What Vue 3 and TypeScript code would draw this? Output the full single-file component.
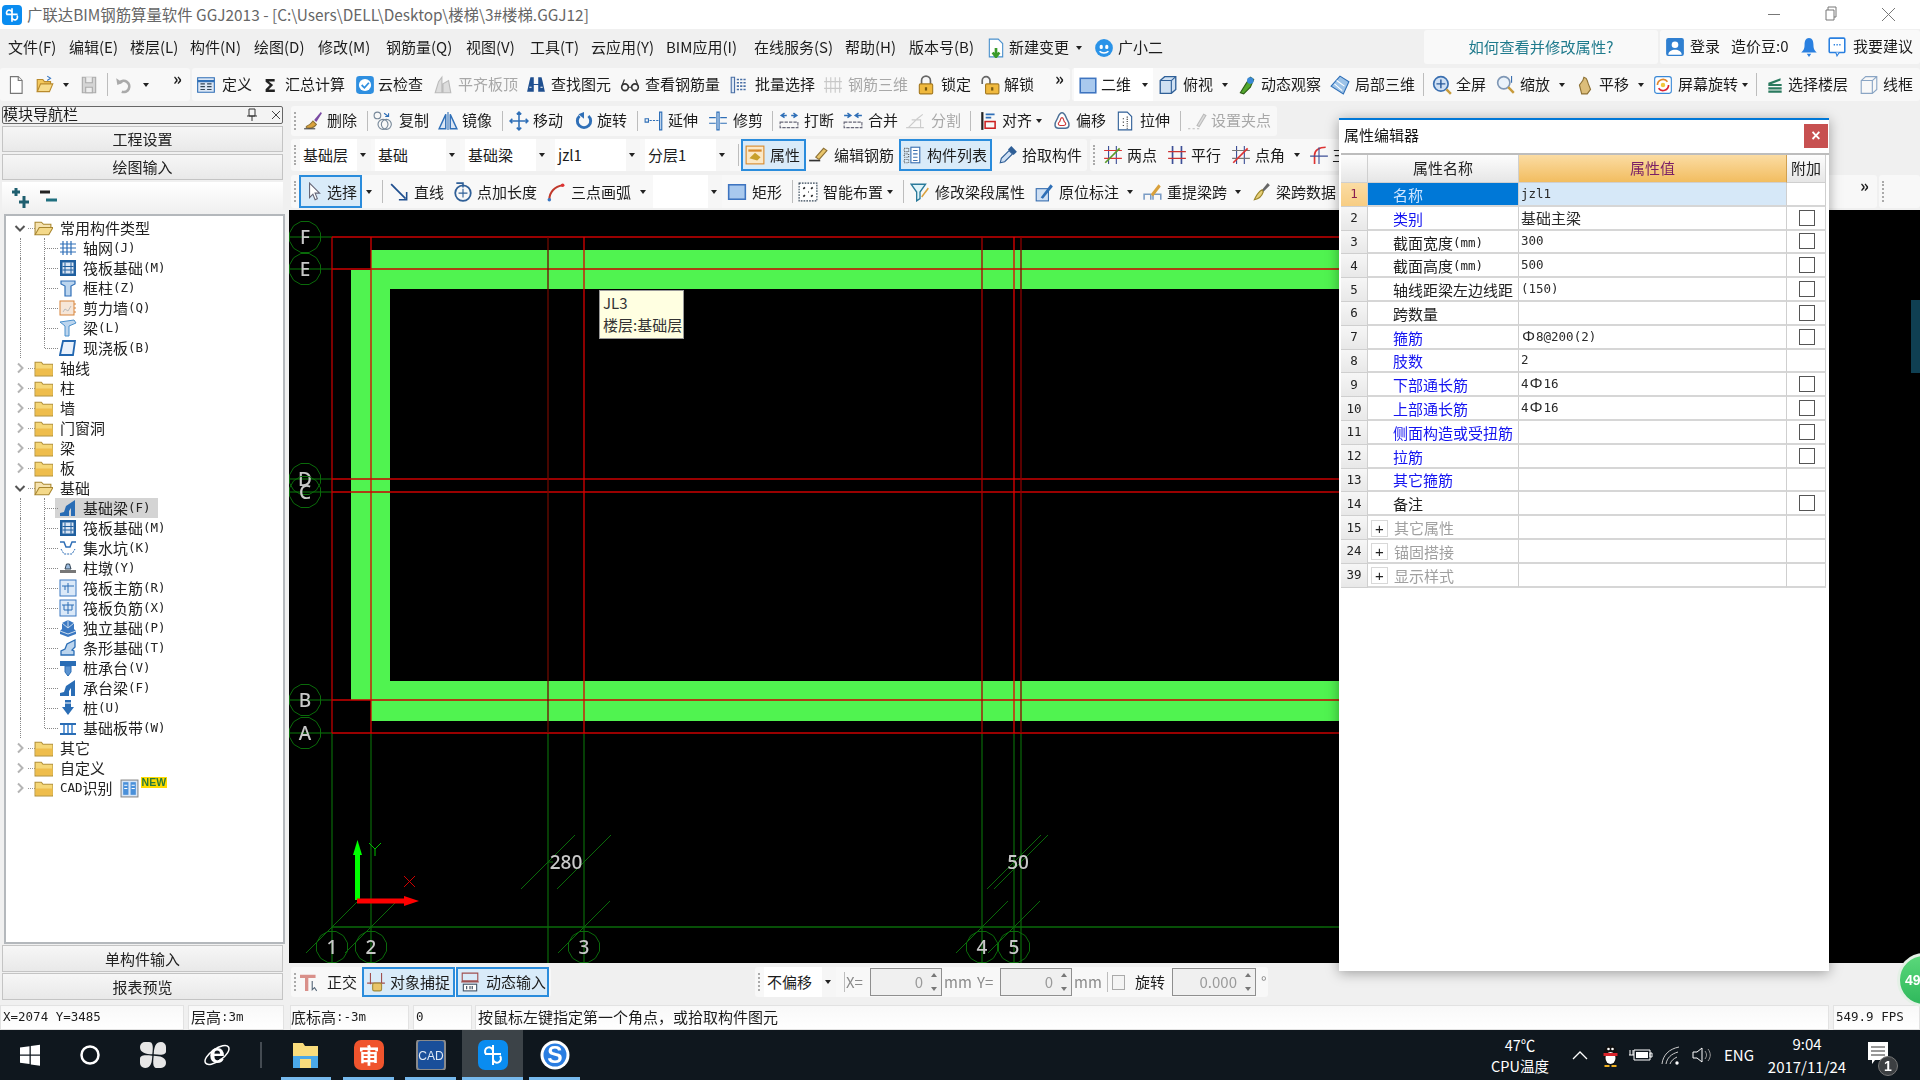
<script setup lang="ts">
type It = { x: number; k?: string; i?: string; tx?: number; t?: string; f?: string; end?: number; il?: number; w?: number; g?: number; mr?: number }
type Band = { x: number; end: number; ml: number; pad: number; items: It[] }

const I = (x: number, i: string, tx: number, t: string, f = '', end?: number, il = 0): It => ({ x, i, tx, t, f, end, il })
const T = (x: number, t: string, f = ''): It => ({ x, t, f })
const C = (cx: number): It => ({ x: cx - 6, k: 'caret' })
const S = (x: number): It => ({ x, k: 'sep' })
const G = (x: number): It => ({ x, k: 'grip' })
const Cb = (x: number, end: number, t: string): It => ({ x, end, t, k: 'combo' })
const Sp = (x: number, end: number, t: string): It => ({ x, end, t, k: 'spin' })
const Ck = (x: number): It => ({ x, k: 'ckit' })
const D = (x: number): It => ({ x, t: '»', k: 'more' })

const ICON = 20
function band(x: number, end: number, items: It[]): Band {
  items.forEach((it, n) => {
    const nx = n + 1 < items.length ? items[n + 1].x : end
    const e = it.end ?? nx
    it.w = e - it.x
    it.g = nx - e
    it.il = it.il ?? 0
    if (it.tx) it.mr = it.tx - it.x - it.il - ICON
  })
  return { x, end, ml: 0, pad: items[0].x - x, items }
}
function line(cls: string, start: number, bands: Band[]) {
  let p = start
  bands.forEach((b) => {
    b.ml = b.x - p
    p = b.end
  })
  return { cls, bands }
}

const topLines = [
  line('l-menu', 0, [
    band(0, 1422, [
      T(8, '文件(F)'), T(69, '编辑(E)'), T(130, '楼层(L)'), T(190, '构件(N)'), T(254, '绘图(D)'), T(318, '修改(M)'),
      T(386, '钢筋量(Q)'), T(466, '视图(V)'), T(530, '工具(T)'), T(591, '云应用(Y)'), T(666, 'BIM应用(I)'), T(754, '在线服务(S)'),
      T(845, '帮助(H)'), T(909, '版本号(B)'), I(986, 'docg', 1009, '新建变更'), C(1079), I(1094, 'xiao', 1118, '广小二')
    ]),
    band(1424, 1658, [{ x: 1424, t: '如何查看并修改属性?', k: 'help' }]),
    band(1660, 1920, [I(1665, 'login', 1690, '登录'), T(1731, '造价豆:0'), I(1799, 'bell', 1799, ''), I(1827, 'sugg', 1853, '我要建议')])
  ]),
  line('l-tb', 0, [
    band(0, 190, [
      I(6, 'new', 30, ''), I(35, 'open', 56, ''), C(66), I(79, 'save', 100, '', 'dim'), S(107), I(114, 'undo', 136, '', 'dim'), C(146), D(173)
    ]),
    band(192, 1070, [
      I(196, 'def', 222, '定义'), I(260, 'sigma', 285, '汇总计算'), I(355, 'cloud', 378, '云检查'), I(433, 'flat', 458, '平齐板顶', 'dim'),
      I(526, 'binoc', 551, '查找图元'), I(620, 'glass', 645, '查看钢筋量'), I(729, 'batch', 755, '批量选择'), I(823, 'r3d', 848, '钢筋三维', 'dim'),
      I(916, 'lock', 941, '锁定'), I(980, 'unlock', 1004, '解锁'), D(1055)
    ]),
    band(1072, 1920, [
      I(1074, 'square', 1101, '二维', 'white', 1139, 4), { x: 1139, end: 1153, k: 'caret white' },
      I(1158, 'cube', 1183, '俯视'), C(1225), I(1237, 'orbit', 1261, '动态观察'), I(1330, 'local', 1355, '局部三维'), S(1423),
      I(1432, 'full', 1456, '全屏'), I(1496, 'zoomi', 1520, '缩放'), C(1562), I(1575, 'hand', 1599, '平移'), C(1641),
      I(1653, 'rot', 1678, '屏幕旋转'), C(1745), S(1756), I(1765, 'layers', 1788, '选择楼层'), I(1859, 'wire', 1883, '线框')
    ])
  ])
]

const rows = [
  line('l-r2', 289, [
    band(291, 1277, [
      G(291), I(303, 'brush', 327, '删除'), S(367), I(373, 'copy', 399, '复制'), I(438, 'mirror', 462, '镜像'), S(502),
      I(509, 'move', 533, '移动'), I(574, 'rot2', 597, '旋转'), S(637), I(644, 'extend', 668, '延伸'), I(708, 'trim', 733, '修剪'), S(772),
      I(779, 'brk', 804, '打断'), I(843, 'mrg', 868, '合并'), I(905, 'splt', 931, '分割', 'dim'), S(970), I(979, 'alignl', 1002, '对齐'), C(1039),
      I(1052, 'offs', 1076, '偏移'), I(1115, 'strch', 1140, '拉伸'), S(1180), I(1187, 'grab', 1211, '设置夹点', 'dim')
    ])
  ]),
  line('l-r3', 289, [
    band(291, 1087, [
      G(291), Cb(300, 371, '基础层'), Cb(375, 460, '基础'), Cb(465, 550, '基础梁'), Cb(555, 640, 'jzl1'), Cb(645, 730, '分层1'), S(738),
      I(741, 'prop', 770, '属性', 'active', 806, 4), I(808, 'ebar', 834, '编辑钢筋'), I(899, 'list', 927, '构件列表', 'active', 992, 3), I(998, 'drop', 1022, '拾取构件')
    ]),
    band(1090, 1340, [G(1090), I(1103, 'twop', 1127, '两点'), I(1167, 'para', 1191, '平行'), I(1231, 'ang', 1255, '点角'), C(1297), I(1309, 'tri', 1332, '三')])
  ]),
  line('l-r4', 289, [
    band(291, 1877, [
      G(291), I(299, 'cursor', 327, '选择', 'active', 362, 5), C(369), S(382), I(390, 'line', 414, '直线'), I(453, 'plen', 477, '点加长度'),
      I(546, 'arc', 571, '三点画弧'), C(643), Cb(653, 722, ''), I(727, 'rect', 752, '矩形'), S(792), I(798, 'smart', 823, '智能布置'), C(890), S(903),
      I(910, 'fnl', 935, '修改梁段属性'), I(1034, 'mark', 1059, '原位标注'), C(1130), I(1143, 'relift', 1167, '重提梁跨'), C(1238),
      I(1251, 'broom', 1276, '梁跨数据'), D(1860)
    ]),
    band(1879, 1920, [G(1879)])
  ])
]

const bottomLine = line('l-bot', 289, [
  band(291, 551, [G(291), I(300, 'ortho', 327, '正交'), I(362, 'snap', 390, '对象捕捉', 'active', 455, 4), I(456, 'dyn', 486, '动态输入', 'active', 549, 4)]),
  band(755, 1268, [
    G(755), Cb(764, 836, '不偏移'), S(844), T(846, 'X=', 'gray'), Sp(870, 942, '0'), T(944, 'mm', 'gray'), T(977, 'Y=', 'gray'), Sp(1000, 1072, '0'),
    T(1074, 'mm', 'gray'), S(1107), Ck(1112), T(1135, '旋转'), Sp(1172, 1256, '0.000'), T(1261, '°', 'gray')
  ])
])

const ico: Record<string, string> = {
  new: '<path d="M4 1.5h7l3.5 3.5v11.5H4z" fill="#fff" stroke="#777"/><path d="M11 1.5V5h3.5" fill="#eee" stroke="#777"/>',
  open: '<path d="M2 15V4h5l1.5 2H14v2" fill="#f4c95d" stroke="#b98a2c"/><path d="M2 15l3-7h11l-3 7z" fill="#f7dc8c" stroke="#b98a2c"/><path d="M11 1l3 2-3 2" fill="none" stroke="#3a78c2"/>',
  save: '<path d="M3 2h12v14H3z" fill="#d5d5d5" stroke="#aaa"/><path d="M6 2v5h6V2M6 11h6v5H6z" fill="#eee" stroke="#aaa"/>',
  undo: '<path d="M5 7a5 5 0 1 1 2 8" fill="none" stroke="#aaa" stroke-width="2.4"/><path d="M2 3l1 6 5-2z" fill="#aaa"/>',
  def: '<path d="M1.5 2.5h15v13h-15z" fill="#dbe6f4" stroke="#2f6fb7"/><path d="M1.5 5.5h15" stroke="#2f6fb7" stroke-width="2"/><path d="M4 8h4M4 10.5h4M4 13h4M10 8h4M10 10.5h4M10 13h4" stroke="#345"/>',
  sigma: '<text x="9" y="15" text-anchor="middle" font-size="16" font-weight="700" font-family="DejaVu Sans" fill="#222">Σ</text>',
  cloud: '<rect x="1" y="1" width="16" height="16" rx="3" fill="#2f8fe0"/><circle cx="9" cy="9" r="5.5" fill="#fff"/><path d="M6 9l2.5 2.5L12.5 7" fill="none" stroke="#2f8fe0" stroke-width="1.6"/>',
  flat: '<path d="M2 16l3-10 3-4v14zM9 16V8l5-3 2 11z" fill="#ddd" stroke="#bbb"/>',
  binoc: '<path d="M3 6l1-4h3v6h4V2h3l1 4 2 9h-6V9H7v6H1z" fill="#1f4f8f"/><path d="M3 11h2M13 11h2" stroke="#fff"/>',
  glass: '<circle cx="4.5" cy="11" r="3" fill="none" stroke="#333" stroke-width="1.5"/><circle cx="13.5" cy="11" r="3" fill="none" stroke="#333" stroke-width="1.5"/><path d="M7.5 11h3M2 9l2-5M16 9l-2-5" fill="none" stroke="#333"/>',
  batch: '<path d="M2 2h3v14H2z" fill="#dbe6f4" stroke="#4a6fa5"/><path d="M7 4h9M7 7h9M7 10h9M7 13h9" stroke="#4a6fa5" stroke-width="1.4" stroke-dasharray="2 1"/>',
  r3d: '<path d="M3 2v14M7 2v14M11 2v14M15 2v14M1 6h16M1 12h16" stroke="#c8c8c8"/>',
  lock: '<path d="M5 8V5a4 4 0 0 1 8 0v3" fill="none" stroke="#666" stroke-width="1.5"/><rect x="3" y="8" width="12" height="9" rx="1" fill="#f0b93e" stroke="#a57a20"/><rect x="8" y="11" width="2" height="3" fill="#7a5a10"/>',
  unlock: '<path d="M2 8V5a3.5 3.5 0 0 1 7 0v3" fill="none" stroke="#666" stroke-width="1.5"/><rect x="5" y="8" width="12" height="9" rx="1" fill="#f0b93e" stroke="#a57a20"/><rect x="10" y="11" width="2" height="3" fill="#7a5a10"/>',
  square: '<rect x="2" y="3" width="14" height="13" fill="#a9c9ee" stroke="#3e74c0" stroke-width="1.4"/>',
  cube: '<path d="M2 5l4-3.5h10V13l-4 3.5H2z" fill="#cfe0f2" stroke="#2f5f97" stroke-width="1.2"/><path d="M2 5h10v11.5M12 5l4-3.5" fill="none" stroke="#2f5f97"/>',
  orbit: '<path d="M3 16L8 8l4-6 3 2-3 7-6 6z" fill="#53a82e" stroke="#2d5e17"/><circle cx="12" cy="5" r="3" fill="#3a88d6"/>',
  local: '<path d="M9 1l8 5-5 11L1 10z" fill="#9dc3e8" stroke="#2f6fb7"/><path d="M6 5l7 5M4 8l7 6" stroke="#fff"/>',
  full: '<circle cx="8" cy="8" r="6.5" fill="#cfe0f4" stroke="#3a6fb0" stroke-width="1.5"/><path d="M8 4v8M4 8h8" stroke="#2a5a9a" stroke-width="1.3"/><path d="M13 13l4 4" stroke="#c79a3a" stroke-width="2.2"/>',
  zoomi: '<circle cx="7" cy="7" r="5.5" fill="#eaf2fa" stroke="#7f97b5" stroke-width="1.5"/><path d="M11 11l5 5" stroke="#c79a3a" stroke-width="2.2"/><path d="M14 1v6" stroke="#3a6fb0"/>',
  hand: '<path d="M4 9l3-4 1-3 2 1 1 2 1 3 2 5-3 4H6z" fill="#dcbd7a" stroke="#8d7136"/>',
  rot: '<rect x="1.5" y="1.5" width="15" height="15" rx="2" fill="#fff" stroke="#3a88d6"/><path d="M4 9a5 5 0 0 1 9-3" fill="none" stroke="#e3872a" stroke-width="1.5"/><path d="M14 9a5 5 0 0 1-9 3" fill="none" stroke="#d23" stroke-width="1.5"/><circle cx="9" cy="9" r="2" fill="#f0c93e"/>',
  layers: '<path d="M3 7l11-4v2L6 8h9v2H3zM3 11h12v2H3zM3 14h12v2H3z" fill="#2a7a5f"/>',
  wire: '<path d="M2 5l4-3.5h10V13l-4 3.5H2zM2 5h10v11.5M12 5l4-3.5" fill="none" stroke="#8aa5c4"/>',
  brush: '<path d="M3 14c2-1 4-2 6-5l3 3c-2 3-5 4-9 3z" fill="#d9a13c" stroke="#8d7136"/><path d="M10 8l6-7 1 1-5 8z" fill="#7a4aa3"/><path d="M1 16h10" stroke="#444"/>',
  copy: '<circle cx="4" cy="4" r="3" fill="none" stroke="#789"/><circle cx="9" cy="12" r="4.5" fill="none" stroke="#789"/><circle cx="12" cy="12" r="4.5" fill="none" stroke="#789"/><path d="M10 2l4 3M14 2v3h-3" fill="none" stroke="#2f6fb7"/>',
  mirror: '<path d="M1 16L7 3v13zM17 16L11 3v13z" stroke="#2f6fb7" stroke-width="1.3" fill="#dbe6f4"/><path d="M9 1v16" stroke="#2f6fb7"/>',
  move: '<path d="M9 1v16M1 9h16M7 3l2-2 2 2M7 15l2 2 2-2M3 7L1 9l2 2M15 7l2 2-2 2" fill="none" stroke="#2f6fb7" stroke-width="1.4"/>',
  rot2: '<path d="M5 4.5a6 6 0 1 0 8 0" fill="none" stroke="#2f6fb7" stroke-width="2.6"/><path d="M9 1v6L4 3z" fill="#2f6fb7"/>',
  extend: '<path d="M1 7h3v3H1z" fill="none" stroke="#2f6fb7"/><path d="M5 8.5h8" stroke="#2f6fb7" stroke-dasharray="2 1"/><path d="M14 1h2v16h-2z" fill="#cfe0f4" stroke="#2f6fb7"/>',
  trim: '<path d="M8 1h2v16H8z" fill="#cfe0f4" stroke="#2f6fb7"/><path d="M1 6h6M1 11h6M11 6h6M11 11h6" stroke="#2f6fb7"/>',
  brk: '<path d="M2 4h5M11 4h5M5 2L2 4l3 2M13 2l3 2-3 2" fill="none" stroke="#2f6fb7" stroke-width="1.3"/><path d="M1 10h16v5H1z" fill="none" stroke="#667" stroke-dasharray="3 1"/>',
  mrg: '<path d="M1 4h5M12 4h5M4 2l3 2-3 2M14 2l-3 2 3 2" fill="none" stroke="#2f6fb7" stroke-width="1.3"/><path d="M1 10h16v5H1z" fill="none" stroke="#667" stroke-dasharray="3 1"/>',
  splt: '<path d="M1 15h16M3 15l8-8 5-4M6 8h8v7" fill="none" stroke="#ccc"/>',
  alignl: '<path d="M3 1v16" stroke="#222" stroke-width="2"/><path d="M6 3h8M6 6h5" stroke="#2f6fb7" stroke-width="1.6"/><rect x="5.5" y="9.5" width="9" height="6" fill="none" stroke="#c22" stroke-width="1.4"/>',
  offs: '<path d="M9 1.5c3 0 3 4 5 7s2 7-2 7H6c-4 0-4-4-2-7s2-7 5-7z" fill="#fff" stroke="#4b6f95" stroke-width="1.3"/><path d="M9 6c2 0 1 3 2.5 4s1 3-1 3H7.5c-2 0-2.5-2-1-3s.5-4 2.5-4z" fill="none" stroke="#c33"/>',
  strch: '<path d="M3 1h8l4 4v12H3z" fill="#fff" stroke="#2f5f97"/><path d="M7 7h2M7 10h2M7 13h2M11 5v12" stroke="#333" stroke-dasharray="1 1"/>',
  grab: '<path d="M1 16h2M5 16h2M9 16h2" stroke="#bbb"/><path d="M9 13l6-10 2 1-6 10z" fill="#ddd" stroke="#bbb"/>',
  prop: '<rect x="1" y="1" width="16" height="16" fill="#fbe8c6" stroke="#d88b2c"/><path d="M3 5h12" stroke="#d88b2c" stroke-width="2"/><path d="M4 12l5-5 5 4-3 3z" fill="#c8a02c"/>',
  ebar: '<path d="M1 14h10" stroke="#333" stroke-width="1.5"/><path d="M7 11l7-8 3 2-7 8z" fill="#e9c56a" stroke="#8d7136"/>',
  list: '<path d="M2 3h4v3H2zM2 8h4v3H2zM2 13h4v3H2z" fill="none" stroke="#555" stroke-dasharray="1 1"/><rect x="8" y="2" width="8" height="14" fill="#fff" stroke="#3a6fb0"/><path d="M10 5h4M10 8h4M10 11h4M10 14h4" stroke="#3a6fb0"/>',
  drop: '<path d="M2 16l1-4 7-7 3 3-7 7z" fill="#cfe0f4" stroke="#2f5f97"/><path d="M9 4l3-3 5 5-3 3z" fill="#2f5f97"/>',
  twop: '<path d="M5 1v16M12 1v16" stroke="#3d4f96"/><path d="M1 5h16M1 12h16" stroke="#d33"/><path d="M2 16L15 3" stroke="#5a9a2a" stroke-width="1.5"/>',
  para: '<path d="M5 1v16M13 1v16" stroke="#3d4f96" stroke-width="1.5"/><path d="M1 6h16M1 12h16" stroke="#c33"/>',
  ang: '<path d="M5 1v16M12 1v16" stroke="#3d4f96"/><path d="M1 5h16M1 12h16" stroke="#777"/><path d="M2 16L15 3" stroke="#d33" stroke-width="1.5"/>',
  tri: '<path d="M5 17V9c0-4 4-7 10-7" fill="none" stroke="#d33" stroke-width="1.5"/><path d="M1 10h16M9 2v15" stroke="#3d4f96"/>',
  cursor: '<path d="M5 1v13l3-3 2 5 2-1-2-5h4z" fill="#fff" stroke="#667"/>',
  line: '<path d="M1 2l13 13" stroke="#1f4f8f" stroke-width="1.6"/><path d="M15 9v7H8" fill="none" stroke="#1f4f8f" stroke-width="1.4"/>',
  plen: '<circle cx="9" cy="10" r="7" fill="none" stroke="#2f5f97" stroke-width="1.6"/><path d="M9 6v8M5 10h8" stroke="#2f5f97"/><path d="M3 1h6v4" fill="none" stroke="#2f5f97" stroke-width="1.4"/>',
  arc: '<path d="M3 16C3 9 8 4 15 3" fill="none" stroke="#c0392b" stroke-width="1.8"/><circle cx="3" cy="16" r="1.6" fill="#3a78c2"/><circle cx="15" cy="3" r="1.6" fill="#d33"/>',
  rect: '<rect x="1.5" y="2.5" width="15" height="13" fill="#a9c9ee" stroke="#3e74c0" stroke-width="1.4"/>',
  smart: '<rect x="1" y="1" width="16" height="16" fill="#fff" stroke="#345" stroke-dasharray="1.5 1"/><path d="M5 5l1 1M12 5l1 1M9 9h.5M5 12l1 1M12 12l1 1" stroke="#222" stroke-width="2"/>',
  fnl: '<path d="M1 2h13l-5 7v6l-3 2V9z" fill="#dff4fa" stroke="#2a7a9a" stroke-width="1.2"/><path d="M10 13l6-8 1 1-6 8z" fill="#d9a13c"/>',
  mark: '<rect x="2" y="6" width="11" height="11" fill="#cfe0f4" stroke="#3a6fb0"/><path d="M6 14l9-12 2 2-9 11z" fill="#2f6fb7"/>',
  relift: '<path d="M1 16v-5h6v5M9 16v-5h7v5" fill="none" stroke="#7a9bc4" stroke-width="1.4"/><path d="M7 11l7-9 2 2-7 9z" fill="#d9a13c"/>',
  broom: '<path d="M10 7l5-6 2 2-6 6z" fill="#666"/><path d="M3 16c2-4 3-7 7-9l1 2c-1 3-3 6-8 7z" fill="#e7cf78" stroke="#9a862c"/>',
  ortho: '<path d="M0 4h14M6 4v13" stroke="#d9908a" stroke-width="3"/><path d="M11 8v8l2-2 2 3" fill="#fff" stroke="#567"/>',
  snap: '<path d="M4 1v10M14 1v10M1 10h16" stroke="#a05050"/><rect x="6" y="10" width="8" height="7" rx="1.5" fill="#e9c56a" stroke="#a48c3a"/>',
  dyn: '<path d="M2 1h14v7H2zM1 9h16" fill="none" stroke="#a05050"/><rect x="3" y="11" width="12" height="6" fill="#fff" stroke="#456"/><path d="M6 12.5v3M9 12.5v3M11 12.5v3" stroke="#345"/>',
  grid: '<path d="M4 2v14M8 2v14M12 2v14M1 5h16M1 9h16M1 13h16" stroke="#2f6fb7" stroke-width="1.2"/>',
  raft: '<rect x="1" y="1" width="16" height="16" fill="#1f5f9f"/><rect x="3.5" y="3.5" width="11" height="11" fill="#dbe6f4"/><path d="M6 3.5v11M12 3.5v11M3.5 7.5h11M3.5 11h11" stroke="#1f5f9f"/>',
  col: '<path d="M2 2h14v3l-4 2v10H6V7L2 5z" fill="#bcd5ee" stroke="#2f6fb7" stroke-width="1.2"/>',
  wall: '<rect x="1" y="2" width="14" height="14" fill="#f6e6d8" stroke="#d8843a"/><path d="M4 13l2-3 3 2 3-5" fill="none" stroke="#bbb"/><path d="M15 5h2M15 9h2M15 13h2" stroke="#d8843a"/>',
  beam: '<path d="M1 3l14-2 2 3-7 3v10H6V7z" fill="#bcd5ee" stroke="#4a90cc"/>',
  slab: '<path d="M4 2h12l-2 14H1z" fill="#e9f1fb" stroke="#2166b0" stroke-width="1.8"/>',
  fbeam: '<path d="M1 17v-3l4-1 2-6 9-6v16h-4V9l-2 3v5z" fill="#2a6db5"/>',
  pit: '<path d="M1 3h4l2 5h4l2-5h4" fill="none" stroke="#2f6fb7" stroke-width="1.5"/><path d="M2 10l3 5h8l3-5" fill="none" stroke="#2f6fb7" stroke-dasharray="2 1"/>',
  pier: '<path d="M6 10l1.5-5h3L12 10z" fill="#9dbde0" stroke="#345"/><rect x="1" y="11" width="16" height="3" fill="#777"/>',
  rmain: '<rect x="1" y="1" width="16" height="16" fill="#dbe9f8" stroke="#3a78c2"/><path d="M3 7h12M9 4v10M6 7v4" fill="none" stroke="#2a6db5"/>',
  rneg: '<rect x="1" y="1" width="16" height="16" fill="#dbe9f8" stroke="#3a78c2"/><path d="M3 6h12M9 3v12M5 6v5h8V6" fill="none" stroke="#2a6db5"/>',
  iso: '<path d="M9 1l6 3v6l2 2v3l-8 3-8-3v-3l2-2V4z" fill="#3a78c2"/><path d="M9 1v8M3 4l6 5 6-5M1 12l8 3 8-3" fill="none" stroke="#cde"/>',
  strip: '<path d="M2 16v-4l4-2 2-5 8-4v7l-3 3 2 1v4z" fill="#bcd5ee" stroke="#2a6db5" stroke-width="1.3"/>',
  cap: '<path d="M1 2h16v5H1z" fill="#2a6db5"/><path d="M6 7h6v6l-3 4-3-4z" fill="#5a93d0" stroke="#2a6db5"/>',
  pile: '<path d="M6 1h6v7h3l-6 8-6-8h3z" fill="#2a6db5"/><path d="M6 4h6" stroke="#fff"/>',
  band: '<path d="M1 4h16v2H1zM1 14h16v2H1z" fill="#2a6db5"/><path d="M5 6v8M9 6v8M13 6v8" stroke="#6a9fd8" stroke-width="2"/>',
  cad: '<rect x="1" y="1" width="16" height="16" fill="#d7e6f7" stroke="#888"/><rect x="3" y="3" width="5" height="12" fill="#4a90d9"/><rect x="10" y="3" width="5" height="12" fill="#4a90d9"/><path d="M4 6h3M4 9h3M11 6h3M11 9h3" stroke="#fff"/>',
  folder: '<path d="M1 16V3h6l1.5 2H18v11z" fill="#f5d778" stroke="#b29038"/><path d="M1.500 9h16v6.500h-16z" fill="#eebd4c"/>',
  fopen: '<path d="M1 15V3h6l2 2h7v3" fill="#f6e3b0" stroke="#a8862f"/><path d="M1 15l4-7h13l-4 7z" fill="#f4d98a" stroke="#a8862f"/>',
  docg: '<path d="M3 1h8l4 4v12H3z" fill="#fff" stroke="#4a90cc"/><path d="M9 9v6M6 13l3 4 3-4" fill="none" stroke="#3a9a2a" stroke-width="2.4"/>',
  xiao: '<circle cx="9" cy="9" r="8" fill="#2a93e8"/><ellipse cx="6.500" cy="8" rx="1.500" ry="2" fill="#fff"/><ellipse cx="11.500" cy="8" rx="1.500" ry="2" fill="#fff"/><path d="M5 12c2 2 6 2 8 0" fill="none" stroke="#fff" stroke-width="1.3"/>',
  login: '<rect x="1" y="1" width="16" height="16" rx="2" fill="#2f7fd0"/><circle cx="9" cy="7" r="3" fill="#fff"/><path d="M3 16c0-6 12-6 12 0z" fill="#fff"/>',
  bell: '<path d="M9 1c-3 0-4 3-4 6 0 4-1 5-3 7h14c-2-2-3-3-3-7 0-3-1-6-4-6z" fill="#2a80e0"/><path d="M7 15l2 3 2-3z" fill="#2a80e0"/>',
  sugg: '<rect x="2" y="1" width="14" height="13" rx="1" fill="#fff" stroke="#2a80e0" stroke-width="1.4"/><path d="M8 14l1 3 2-3" fill="#fff" stroke="#2a80e0"/><path d="M6 7h1.200M8.500 7h1.200M11 7h1.200" stroke="#2a80e0" stroke-width="1.500"/>',
  app: '<rect width="18" height="18" rx="3.500" fill="#0a8cf0"/><path d="M9 3v12M4 8.500h10" stroke="#fff" stroke-width="1.500"/><path d="M4.500 8.500a2.500 2.500 0 1 1 4.500-2M13.500 9.500a2.500 2.500 0 1 1-4.500 2" fill="none" stroke="#fff" stroke-width="1.500"/>'
}

const petal = 'M14.300 14.300C8 14 2 13 2 7a5 5 0 0 1 5-5h4c3.500 0 4.500 3 3.300 12.300z'
const tk: Record<string, string> = {
  win: '<path d="M5 7.500l9.500-1.300V14.500H5zM15.800 6L25 4.700v9.800h-9.200zM5 15.700h9.500V24L5 22.700zM15.800 15.700H25v10l-9.200-1.300z" fill="#fff"/>',
  ring: '<circle cx="15" cy="15" r="8.500" stroke="#fff" stroke-width="2.500" fill="none"/>',
  fan: `<g fill="#e6e6e6"><path d="${petal}"/><path transform="rotate(90 15 15)" d="${petal}"/><path transform="rotate(180 15 15)" d="${petal}"/><path transform="rotate(270 15 15)" d="${petal}"/></g>`,
  ie: '<text x="15" y="23" font-size="28" font-family="Liberation Sans" font-weight="700" fill="#fff" text-anchor="middle">e</text><ellipse cx="15" cy="15" rx="14" ry="6" transform="rotate(-35 15 15)" stroke="#fff" fill="none" stroke-width="1.500"/>',
  folder: '<path d="M2 3h10l2 3h13v22H2z" fill="#f9dc7c"/><path d="M2 16h25v12H2z" fill="#4aa8e8"/><rect x="9" y="19" width="11" height="9" fill="#f9dc7c"/>',
  shen: '<rect x="0" y="0" width="30" height="30" rx="7" fill="#f0542d"/><text x="15" y="23" font-size="21" font-family="Noto Sans CJK SC" font-weight="700" fill="#fff" text-anchor="middle">审</text>',
  cad: '<rect x="1" y="0" width="28" height="30" rx="3" fill="#1a4f9a" stroke="#8a8a8a" stroke-width="2"/><text x="15" y="20" font-size="12" font-family="Liberation Sans" fill="#dfe9f5" text-anchor="middle">CAD</text>',
  app: '<rect width="30" height="30" rx="7" fill="#0a8cf0"/><path d="M15 5v20M7 14h16" stroke="#fff" stroke-width="2"/><path d="M8 14a4 4 0 1 1 7-3M22 16a4 4 0 1 1-7 3" fill="none" stroke="#fff" stroke-width="2"/>',
  sogou: '<circle cx="15" cy="15" r="14.500" fill="#fff"/><circle cx="15" cy="15" r="11.500" fill="#2a7de1"/><text x="15" y="23" font-size="23" font-family="Liberation Sans" font-weight="700" fill="#fff" text-anchor="middle">S</text>'
}

const taskItems = [
  { k: 'win', w: 60 }, { k: 'ring', w: 60 }, { k: 'fan', w: 66 }, { k: 'ie', w: 62 },
  { k: '', w: 33, cls: 'tsep' },
  { k: 'folder', w: 50, cls: 'run' }, { k: 'shen', w: 51, cls: 'run', ml: 12 }, { k: 'cad', w: 51, cls: 'run', ml: 11 },
  { k: 'app', w: 61, cls: 'run cur', ml: 6 }, { k: 'sogou', w: 51, cls: 'run', ml: 6 }
]

const tree: { l: number; t: string; key?: string; i?: string; open?: boolean; last?: boolean; sel?: boolean; mono?: boolean }[] = [
  { l: 0, t: '常用构件类型', open: true },
  { l: 1, i: 'grid', t: '轴网', key: '(J)' }, { l: 1, i: 'raft', t: '筏板基础', key: '(M)' }, { l: 1, i: 'col', t: '框柱', key: '(Z)' },
  { l: 1, i: 'wall', t: '剪力墙', key: '(Q)' }, { l: 1, i: 'beam', t: '梁', key: '(L)' }, { l: 1, i: 'slab', t: '现浇板', key: '(B)', last: true },
  { l: 0, t: '轴线' }, { l: 0, t: '柱' }, { l: 0, t: '墙' }, { l: 0, t: '门窗洞' }, { l: 0, t: '梁' }, { l: 0, t: '板' },
  { l: 0, t: '基础', open: true },
  { l: 1, i: 'fbeam', t: '基础梁', key: '(F)', sel: true }, { l: 1, i: 'raft', t: '筏板基础', key: '(M)' }, { l: 1, i: 'pit', t: '集水坑', key: '(K)' },
  { l: 1, i: 'pier', t: '柱墩', key: '(Y)' }, { l: 1, i: 'rmain', t: '筏板主筋', key: '(R)' }, { l: 1, i: 'rneg', t: '筏板负筋', key: '(X)' },
  { l: 1, i: 'iso', t: '独立基础', key: '(P)' }, { l: 1, i: 'strip', t: '条形基础', key: '(T)' }, { l: 1, i: 'cap', t: '桩承台', key: '(V)' },
  { l: 1, i: 'fbeam', t: '承台梁', key: '(F)' }, { l: 1, i: 'pile', t: '桩', key: '(U)' }, { l: 1, i: 'band', t: '基础板带', key: '(W)', last: true },
  { l: 0, t: '其它' }, { l: 0, t: '自定义' }, { l: 0, t: 'CAD', mono: true }
]

const props: { n: string; m?: string; v?: string; blue?: boolean; ck?: boolean; group?: boolean; no: number; sel?: boolean; cjk?: boolean }[] = [
  { no: 1, n: '名称', v: 'jzl1', sel: true },
  { no: 2, n: '类别', v: '基础主梁', blue: true, ck: true, cjk: true },
  { no: 3, n: '截面宽度', m: '(mm)', v: '300', ck: true },
  { no: 4, n: '截面高度', m: '(mm)', v: '500', ck: true },
  { no: 5, n: '轴线距梁左边线距', v: '(150)', ck: true },
  { no: 6, n: '跨数量', ck: true },
  { no: 7, n: '箍筋', v: 'Φ8@200(2)', blue: true, ck: true },
  { no: 8, n: '肢数', v: '2', blue: true },
  { no: 9, n: '下部通长筋', v: '4Φ16', blue: true, ck: true },
  { no: 10, n: '上部通长筋', v: '4Φ16', blue: true, ck: true },
  { no: 11, n: '侧面构造或受扭筋', blue: true, ck: true },
  { no: 12, n: '拉筋', blue: true, ck: true },
  { no: 13, n: '其它箍筋', blue: true },
  { no: 14, n: '备注', ck: true },
  { no: 15, n: '其它属性', group: true },
  { no: 24, n: '锚固搭接', group: true },
  { no: 39, n: '显示样式', group: true }
]

const hY = [237, 269, 479, 492, 700, 733]
const vX = [
  { x: 332, c: '#c00000' }, { x: 371, c: '#d80000' }, { x: 548, c: '#6e0a00' }, { x: 584, c: '#d80000' },
  { x: 982, c: '#a80000' }, { x: 1014, c: '#e00000' }, { x: 1021, c: '#8a0000' }
]
const poly = (cx: number, cy: number, r = 16, n = 12) =>
  Array.from({ length: n }, (_, i) => {
    const a = (i * 2 * Math.PI) / n + Math.PI / n
    return `${(cx + r * Math.cos(a)).toFixed(1)},${(cy + r * Math.sin(a)).toFixed(1)}`
  }).join(' ')
const leftBub = [['F', 237], ['E', 269], ['D', 479], ['C', 492], ['B', 700], ['A', 733]] as [string, number][]
const botBub = [['1', 332], ['2', 371], ['3', 584], ['4', 982], ['5', 1014]] as [string, number][]
const diag = (x: number, y: number, r: number) => `M${x - r} ${y + r}L${x + r} ${y - r}`
</script>

<template>
  <div class="app">
    <div class="win">
      <div class="title">
        <svg class="ticon" viewBox="0 0 18 18" v-html="ico.app"></svg>
        <span class="ttext">广联达BIM钢筋算量软件 GGJ2013 - [C:\Users\DELL\Desktop\楼梯\3#楼梯.GGJ12]</span>
        <div class="wctl">
          <svg viewBox="0 0 57 29"><path d="M22 14.500h12" stroke="#777" fill="none" /></svg>
          <svg viewBox="0 0 57 29"><path d="M23 10h8v10h-8zM25 10V7h8v10h-2" stroke="#777" fill="none" /></svg>
          <svg viewBox="0 0 57 29"><path d="M22 8l13 13M35 8L22 21" stroke="#777" fill="none" /></svg>
        </div>
      </div>

      <div v-for="l in topLines" :key="l.cls" class="line" :class="l.cls">
        <div v-for="b in l.bands" :key="b.x" class="band" :style="{ marginLeft: b.ml + 'px', width: b.end - b.x + 'px', paddingLeft: b.pad + 'px' }">
          <div v-for="it in b.items" :key="it.x" class="it" :class="[it.k, it.f]" :style="{ width: it.w + 'px', marginRight: it.g + 'px' }">
            <svg v-if="it.i" class="ic" viewBox="0 0 18 18" :style="{ marginLeft: it.il + 'px', marginRight: it.mr + 'px' }" v-html="ico[it.i]"></svg>
            <span v-if="it.t">{{ it.t }}</span>
          </div>
        </div>
      </div>

      <div class="main">
        <aside class="left">
          <div class="nav-head"><span>模块导航栏</span>
            <svg class="pin" viewBox="0 0 12 14"><path d="M3 1h6v7H3zM1 8h10M6 8v5" stroke="#333" fill="none" /></svg>
            <svg class="pinx" viewBox="0 0 10 10"><path d="M1 1l8 8M9 1L1 9" stroke="#444" fill="none" /></svg>
          </div>
          <div class="navtab">工程设置</div>
          <div class="navtab">绘图输入</div>
          <div class="tools">
            <svg viewBox="0 0 20 26" width="20" height="26"><path d="M5 3v8M1 7h8M13 11v12M8 17h10" stroke="#1f5f6f" stroke-width="3" fill="none" /></svg>
            <svg viewBox="0 0 20 26" width="20" height="26"><path d="M1 7h10" stroke="#222" stroke-width="3" /><path d="M7 15h11" stroke="#1f6f7f" stroke-width="3" /></svg>
          </div>
          <div class="tree">
            <div v-for="(r, n) in tree" :key="n" class="row" :class="{ ch: r.l === 1, last: r.last }">
              <i v-if="r.l === 1" class="g20"></i>
              <template v-if="r.l === 0">
                <svg class="chev" viewBox="0 0 12 12"><path v-if="r.open" d="M1.500 4l4.500 4.500L10.500 4" stroke="#555" stroke-width="2" fill="none" /><path v-else d="M4 1.500L8.500 6 4 10.500" stroke="#b4b4b4" stroke-width="2" fill="none" /></svg>
                <i class="fdash"></i>
                <svg class="fold" viewBox="0 0 18 18" v-html="r.open ? ico.fopen : ico.folder"></svg>
                <span v-if="r.mono" class="mono cadk">CAD</span><span>{{ r.mono ? '识别' : r.t }}</span>
                <template v-if="r.mono">
                  <svg class="cadi" viewBox="0 0 18 18" v-html="ico.cad"></svg><b class="newb">NEW</b>
                </template>
              </template>
              <div v-else class="node" :class="{ picked: r.sel }">
                <svg class="nic" viewBox="0 0 18 18" v-html="ico[r.i as string]"></svg>
                <span>{{ r.t }}</span><span class="mono">{{ r.key }}</span>
              </div>
            </div>
          </div>
          <div class="navtab b1">单构件输入</div>
          <div class="navtab b2">报表预览</div>
        </aside>

        <section class="right">
          <div v-for="l in rows" :key="l.cls" class="line" :class="l.cls">
            <div v-for="b in l.bands" :key="b.x" class="band" :style="{ marginLeft: b.ml + 'px', width: b.end - b.x + 'px', paddingLeft: b.pad + 'px' }">
              <div v-for="it in b.items" :key="it.x" class="it" :class="[it.k, it.f]" :style="{ width: it.w + 'px', marginRight: it.g + 'px' }">
                <svg v-if="it.i" class="ic" viewBox="0 0 18 18" :style="{ marginLeft: it.il + 'px', marginRight: it.mr + 'px' }" v-html="ico[it.i]"></svg>
                <span v-if="it.t">{{ it.t }}</span>
                <i v-if="it.k === 'combo'" class="tri"></i>
              </div>
            </div>
          </div>

          <div class="canvas">
            <svg class="cad-svg" width="1631" height="753" viewBox="289 210 1631 753">
              <path d="M371 250H1340V289H390V681H1340V721H371V700H351V270H371z" fill="#50f350" />
              <path v-for="y in hY" :key="'g' + y" :d="`M289 ${y}H332`" stroke="#0a7a0a" stroke-width="1.200" />
              <path d="M332 927H1340" stroke="#0a6a0a" stroke-width="1.400" />
              <path v-for="v in vX" :key="'gv' + v.x" :d="`M${v.x} 733V963`" stroke="#0a6a0a" stroke-width="1.200" />
              <path v-for="y in hY" :key="'r' + y" :d="`M332 ${y}H1340`" stroke="#cc0000" stroke-width="1.300" />
              <path v-for="v in vX" :key="'rv' + v.x" :d="`M${v.x} 237V733`" :stroke="v.c" stroke-width="1.300" />
              <path v-for="b in botBub" :key="'t' + b[0]" :d="diag(b[1], 927, 26)" stroke="#0a6a0a" />
              <path v-for="x in [548, 584, 1014, 1021]" :key="'d' + x" :d="diag(x, 862, 27)" stroke="#0a6a0a" />
              <path d="M548 862h5" stroke="#0a6a0a" />
              <g v-for="b in leftBub" :key="'lb' + b[0]">
                <polygon :points="poly(305, b[1])" fill="none" stroke="#0a6a0a" />
                <text :x="305" :y="b[1] + 7" class="bub">{{ b[0] }}</text>
              </g>
              <g v-for="b in botBub" :key="'bb' + b[0]">
                <polygon :points="poly(b[1], 947)" fill="none" stroke="#0a6a0a" />
                <text :x="b[1]" :y="954" class="bub">{{ b[0] }}</text>
              </g>
              <text x="566" y="869" class="bub">280</text>
              <text x="1018" y="869" class="bub">50</text>
              <path d="M357.500 900V850" stroke="#00ff00" stroke-width="5" />
              <path d="M353 855l4.500-15 4.500 15z" fill="#00ff00" />
              <path d="M357 901h50" stroke="#ff0000" stroke-width="5" />
              <path d="M404 896l15 5-15 5z" fill="#ff0000" />
              <path d="M369 843l6 6 6-6M375 849v7" stroke="#00c000" fill="none" />
              <path d="M404 876l11 11M415 876l-11 11" stroke="#d00000" fill="none" />
              <rect x="1911" y="300" width="9" height="73" fill="#0f3f52" />
            </svg>
            <div class="tip">JL3<br />楼层:基础层</div>
          </div>

          <div class="line" :class="bottomLine.cls">
            <div v-for="b in bottomLine.bands" :key="b.x" class="band" :style="{ marginLeft: b.ml + 'px', width: b.end - b.x + 'px', paddingLeft: b.pad + 'px' }">
              <div v-for="it in b.items" :key="it.x" class="it" :class="[it.k, it.f]" :style="{ width: it.w + 'px', marginRight: it.g + 'px' }">
                <svg v-if="it.i" class="ic" viewBox="0 0 18 18" :style="{ marginLeft: it.il + 'px', marginRight: it.mr + 'px' }" v-html="ico[it.i]"></svg>
                <span v-if="it.t">{{ it.t }}</span>
                <i v-if="it.k === 'combo'" class="tri"></i>
                <i v-if="it.k === 'ckit'" class="cbx small"></i>
                <svg v-if="it.k === 'spin'" class="sparr" viewBox="0 0 10 24"><path d="M5 3l3 4H2zM5 21l3-4H2z" fill="#777" /></svg>
              </div>
            </div>
          </div>
        </section>
      </div>

      <div class="status">
        <div class="cell mono">X=2074 Y=3485</div>
        <div class="cell"><span>层高</span><span class="mono">:3m</span></div>
        <div class="cell"><span>底标高</span><span class="mono">:-3m</span></div>
        <div class="cell mono">0</div>
        <div class="cell">按鼠标左键指定第一个角点，或拾取构件图元</div>
        <div class="cell mono">549.9 FPS</div>
      </div>
    </div>

    <div class="taskbar">
      <div v-for="t in taskItems" :key="t.k + t.w" class="tcell" :class="t.cls" :style="{ width: t.w + 'px', marginLeft: (t.ml || 0) + 'px' }">
        <svg v-if="t.k" viewBox="0 0 30 30" width="30" height="30" v-html="tk[t.k]"></svg>
      </div>
      <div class="tray">
        <div class="cpu"><span>47℃</span><span>CPU温度</span></div>
        <svg class="tr w30" viewBox="0 0 30 30"><path d="M8 19l7-7 7 7" stroke="#fff" stroke-width="1.300" fill="none" /></svg>
        <svg class="tr w31" viewBox="0 0 30 30"><ellipse cx="15" cy="15" rx="7" ry="10" fill="#111" /><ellipse cx="15" cy="18" rx="5" ry="6" fill="#fff" /><circle cx="13" cy="9" r="1.300" fill="#fff" /><circle cx="17" cy="9" r="1.300" fill="#fff" /><path d="M8 13h14v3H8z" fill="#d8232a" /><path d="M9 25h5v2H9zM16 25h5v2h-5z" fill="#f0b020" /></svg>
        <svg class="tr w30" viewBox="0 0 30 30"><path d="M8 10h16v10H8zM24 13h2v4h-2z" fill="none" stroke="#fff" /><path d="M10 12h12v6H10z" fill="#fff" /><path d="M3 15h5M4 10v5M7 10v5" stroke="#fff" fill="none" /></svg>
        <svg class="tr w30" viewBox="0 0 30 30"><path d="M6 24C7 15 13 9 23 7M10 24c1-6 5-10 12-12M14 24c1-3 3-5 7-7" stroke="#ccc" fill="none" /><circle cx="21" cy="23" r="1.700" fill="#fff" /></svg>
        <svg class="tr w30" viewBox="0 0 30 30"><path d="M7 12h4l5-4v14l-5-4H7z" stroke="#fff" fill="none" /><path d="M19 11c2 3 2 5 0 8M22 9c3 4 3 8 0 12" stroke="#999" fill="none" /></svg>
        <div class="eng">ENG</div>
        <div class="clock"><span>9:04</span><span>2017/11/24</span></div>
        <div class="notif">
          <svg viewBox="0 0 30 30" width="30" height="30"><path d="M4 4h20v18H11l-3 4v-4H4z" fill="#fff" /><path d="M7 9h14M7 13h14M7 17h14" stroke="#333" /></svg>
          <b class="nb">1</b>
        </div>
      </div>
    </div>

    <div class="dialog">
      <div class="dhead"><span>属性编辑器</span><div class="dclose">×</div></div>
      <div class="ptable">
        <div class="ph"></div>
        <div class="ph">属性名称</div>
        <div class="ph pv">属性值</div>
        <div class="ph">附加</div>
        <template v-for="p in props" :key="p.no">
          <div class="pn mono" :class="{ on: p.sel }">{{ p.no }}</div>
          <div class="pc name" :class="{ blue: p.blue, sel: p.sel, grp: p.group }">
            <i v-if="p.group" class="plus">+</i>
            <span>{{ p.n }}</span><span v-if="p.m" class="mono">{{ p.m }}</span>
          </div>
          <div class="pc val" :class="{ selv: p.sel, mono: !p.cjk }">
            <span><template v-for="(s, i) in (p.v || '').split('Φ')" :key="i"><i v-if="i" class="rb">Φ</i>{{ s }}</template></span>
          </div>
          <div class="pc add"><i v-if="p.ck" class="cbx"></i></div>
        </template>
      </div>
    </div>

    <div class="badge">49</div>
  </div>
</template>

<style>
html, body { margin: 0; background: #f0f0f0; }
</style>

<style scoped>
.app { position: relative; width: 1920px; height: 1080px; overflow: hidden; background: #f0f0f0; display: flex; flex-direction: column; font: 15px/20px "Noto Sans CJK SC", "Noto Sans", sans-serif; color: #1c1c1c; }
.win { height: 1030px; display: flex; flex-direction: column; filter: blur(.4px); }
.mono { font-family: "DejaVu Sans Mono", "Noto Sans CJK SC", monospace; font-size: 12.5px; }

.title { height: 29px; background: #fff; display: flex; align-items: center; flex: none; }
.ticon { width: 20px; height: 20px; margin-left: 2px; }
.ttext { margin-left: 5px; color: #666; white-space: nowrap; font-size: 15.4px; margin-top: -2px; }
.wctl { margin-left: auto; margin-right: 3px; display: flex; }
.wctl svg { width: 57px; height: 29px; }

.line { display: flex; flex: none; overflow: hidden; }
.l-menu { height: 38px; }
.l-tb { height: 37px; padding-top: 1px; box-sizing: border-box; }
.l-tb .band { height: 33px; }
.l-menu .it > span, .l-tb .it > span, .l-r2 .it > span { margin-top: -2px; }
.l-r2 { height: 30px; margin-bottom: 3px; }
.l-r3 { height: 32px; margin-bottom: 4px; }
.l-r4 { height: 33px; margin-bottom: 2px; }
.l-bot { height: 42px; padding-top: 4px; box-sizing: border-box; }
.l-bot .band { height: 30px; }
.band { display: flex; align-items: center; flex: none; background: #f8f8f8; border-radius: 3px; box-sizing: border-box; }
.l-menu .band { background: transparent; }
.l-menu .band:nth-child(n + 2) { background: #f9f9f9; height: 34px; margin-top: 1px; }
.it { flex: none; display: flex; align-items: center; position: relative; white-space: nowrap; height: 100%; box-sizing: border-box; }
.ic { width: 20px; height: 20px; flex: none; }
.dim { color: #a8a8a8; }
.gray { color: #8a8a8a; }
.white { background: #fff; }
.active { background: #d9ebf9; outline: 2px solid #2a8cdc; outline-offset: -2px; }
.sep::after { content: ""; position: absolute; left: 0; top: 5px; bottom: 5px; width: 1px; background: #bdbdbd; }
.grip::after { content: ""; position: absolute; left: 3px; top: 6px; bottom: 6px; border-left: 2px dotted #aaa; }
.caret::after { content: ""; position: absolute; left: 3px; top: 50%; margin-top: -2px; border: 3.5px solid transparent; border-top: 4px solid #222; border-bottom: 0; }
.combo { background: #fff; padding-left: 3px; }
.tri { margin-left: auto; width: 14px; align-self: stretch; background: #f6f6f6; position: relative; flex: none; }
.tri::after { content: ""; position: absolute; left: 3px; top: 50%; margin-top: -2px; border: 3.5px solid transparent; border-top: 4px solid #222; border-bottom: 0; }
.more { font-size: 17px; line-height: 14px; font-weight: 700; align-items: flex-start; padding-top: 3px; }
.line .more > span { margin-top: 0; }
.help { width: 234px; justify-content: center; color: #1f7a8c; height: 33px; border-radius: 3px; font-size: 15.3px; }
.spin { border: 1.5px solid #8f8f8f; justify-content: flex-end; color: #9a9a9a; background: #f0f0f0; height: 28px; padding-right: 1px; }
.sparr { width: 12px; height: 24px; margin-left: 5px; }
.ckit { padding-left: 0; }

.main { flex: 1; display: flex; min-height: 0; }
.left { width: 285px; flex: none; margin-right: 4px; display: flex; flex-direction: column; padding: 2px 2px 5px; box-sizing: border-box; }
.nav-head { height: 18px; flex: none; display: flex; align-items: center; border: 1px solid #666; border-radius: 2px; background: #f3f3f3; box-sizing: border-box; font-size: 15px; position: relative; }
.nav-head > span { margin-top: -2px; }
.pin { width: 12px; height: 14px; position: absolute; left: 243px; top: 1px; }
.pinx { width: 10px; height: 10px; position: absolute; left: 268px; top: 3px; }
.navtab { height: 26px; margin-top: 2px; flex: none; display: flex; align-items: center; justify-content: center; background: linear-gradient(#f6f6f6, #e9e9e9); border: 1px solid #c4c4c4; box-sizing: border-box; color: #222; }
.tools { height: 32px; flex: none; margin-top: 2px; background: linear-gradient(#fff, #efefef); display: flex; align-items: center; gap: 8px; padding-left: 9px; box-sizing: border-box; }
.tree { flex: 1; min-height: 0; background: #fff; border: 2px solid #b4b8bc; box-sizing: border-box; padding-top: 2px; margin: 0 0 0 2px; width: 281px; }
.b1 { margin-top: 1px; height: 27px; }
.b2 { margin-top: 1px; height: 27px; }

.row { height: 20px; display: flex; align-items: center; position: relative; white-space: nowrap; color: #222; }
.row > svg.chev { width: 12px; height: 12px; margin-left: 8px; flex: none; }
.fdash { width: 7px; border-top: 1px dotted #999; margin-left: 2px; flex: none; }
.fold { width: 19px; height: 19px; margin-left: -1px; margin-right: 7px; flex: none; }
.node { display: flex; align-items: center; height: 20px; margin-left: 49px; padding: 0 7px 0 4px; }
.node.picked { background: #d4d4d4; }
.nic { width: 18px; height: 18px; margin-right: 6px; flex: none; }
.ch::before { content: ""; position: absolute; left: 38px; top: 0; bottom: 0; border-left: 1px dotted #888; }
.last::before { bottom: 50%; }
.ch::after { content: ""; position: absolute; left: 39px; width: 13px; top: 50%; border-top: 1px dotted #888; }
.g20 { position: absolute; left: 14px; top: 0; bottom: 0; border-left: 1px dotted #888; }
.cadk { margin-right: 0; }
.cadi { width: 19px; height: 19px; margin-left: 7px; }
.newb { font: 700 10.5px/11px "Liberation Sans", sans-serif; background: #ffdc00; color: #2a7a3a; padding: 0 1px; margin-left: 2px; margin-top: -12px; }

.right { flex: 1; min-width: 0; padding-top: 2px; display: flex; flex-direction: column; margin-left: 0; }
.canvas { height: 753px; flex: none; background: #000; position: relative; overflow: hidden; }
.cad-svg { display: block; }
.bub { font: 500 19px "Noto Sans", sans-serif; fill: #c8c8c8; text-anchor: middle; }
.tip { position: absolute; left: 310px; top: 80px; width: 85px; height: 49px; box-sizing: border-box; padding: 1px 3px; background: #ffffe1; border: 1px solid #999; line-height: 22px; color: #333; white-space: nowrap; font-size: 15px; }

.status { height: 25px; flex: none; display: flex; }
.cell { background: linear-gradient(#f8f8f8, #fff); border: 1px solid #e2e2e2; box-sizing: border-box; display: flex; align-items: center; padding-left: 2px; padding-bottom: 2px; white-space: nowrap; overflow: hidden; }
.cell:nth-child(1) { width: 184px; }
.cell:nth-child(2) { width: 96px; margin-left: 4px; }
.cell:nth-child(3) { width: 119px; margin-left: 6px; padding-left: 0; }
.cell:nth-child(4) { width: 59px; margin-left: 4px; }
.cell:nth-child(5) { width: 1354px; margin-left: 3px; }
.cell:nth-child(6) { flex: 1; margin-left: 4px; }

.taskbar { height: 50px; flex: none; background: #0f171e; display: flex; align-items: stretch; color: #fff; }
.tcell { display: flex; align-items: center; justify-content: center; flex: none; position: relative; box-sizing: border-box; }
.tsep::after { content: ""; position: absolute; left: 12px; top: 12px; bottom: 12px; width: 2px; background: #444b52; }
.run::after { content: ""; position: absolute; left: 0; right: 0; bottom: 0; height: 3px; background: #76b9ed; }
.cur { background: #3c4348; }
.tray { margin-left: auto; display: flex; align-items: stretch; width: 445px; }
.cpu { width: 90px; display: flex; flex-direction: column; align-items: center; justify-content: center; font-size: 14.5px; line-height: 21px; }
.tr { width: 30px; height: 30px; align-self: center; flex: none; }
.w31 { width: 31px; }
.eng { width: 46px; align-self: center; text-align: center; font-size: 15px; }
.clock { width: 90px; display: flex; flex-direction: column; align-items: center; justify-content: center; line-height: 23px; font-size: 15px; }
.notif { width: 54px; position: relative; display: flex; align-items: center; justify-content: center; padding-bottom: 4px; box-sizing: border-box; }
.nb { position: absolute; left: 26px; top: 26px; width: 20px; height: 20px; border-radius: 50%; background: #3c3f42; border: 1px solid #777; box-sizing: border-box; font: 700 14px/18px "Liberation Sans", sans-serif; text-align: center; }

.dialog { position: absolute; left: 1339px; top: 118px; width: 490px; height: 853px; background: #fff; border-top: 2px solid #0078d7; box-sizing: border-box; box-shadow: 0 2px 12px rgba(0, 0, 0, .35); filter: blur(.35px); }
.dhead { height: 33px; display: flex; align-items: center; padding: 0 0 4px 5px; box-sizing: border-box; position: relative; color: #111; }
.dclose { position: absolute; right: 1px; top: 4px; width: 24px; height: 24px; background: #c75050; color: #fff; display: flex; align-items: center; justify-content: center; font: 700 16px "Liberation Sans", sans-serif; }
.ptable { margin-left: 2px; display: grid; grid-template-columns: 27px 151px 268px 39px; grid-template-rows: 28px repeat(17, 23.8px); border-top: 2px solid #bdbdbd; }
.ph { background: linear-gradient(#fdfdfd, #e6e6e6); border-right: 1px solid #cfcfcf; border-bottom: 1px solid #cfcfcf; box-sizing: border-box; display: flex; align-items: center; justify-content: center; color: #222; padding-bottom: 2px; }
.pv { background: linear-gradient(#fbdca3, #f2bd60); color: #7a1f66; border-right: 1px solid #d0a050; }
.pn { background: linear-gradient(#f6f6f6, #e8e8e8); border-right: 1px solid #cfcfcf; border-bottom: 1px solid #cfcfcf; box-sizing: border-box; display: flex; align-items: center; justify-content: center; color: #222; }
.pn.on { background: linear-gradient(#fbdca3, #f7cd83); color: #8a1f50; }
.pc { border-right: 1px solid #cfcfcf; border-bottom: 2px solid #d6d6d6; box-sizing: border-box; display: flex; align-items: center; white-space: nowrap; background: #fff; }
.name { padding-left: 25px; color: #222; padding-top: 2px; }
.blue { color: #1414f0; }
.sel { background: #0078d7; color: #cfe6ff; }
.grp { padding-left: 3px; color: #a0a0a0; }
.plus { width: 15px; height: 15px; border: 1px solid #d8d8d8; margin-right: 6px; display: flex; align-items: center; justify-content: center; font: 400 15px/1 "Liberation Sans", sans-serif; color: #222; flex: none; }
.val { padding-left: 2px; color: #2a2a2a; }
.rb { display: inline-block; width: 15px; text-align: center; font: 400 15px/1 "Noto Sans", sans-serif; }
.selv { background: #d6e8f8; }
.add { justify-content: center; padding-left: 2px; }
.cbx { display: block; width: 16px; height: 16px; border: 1.5px solid #555; box-sizing: border-box; background: #fff; }
.cbx.small { width: 13px; height: 15px; border-color: #aaa; background: #f4f4f4; }

.badge { position: absolute; left: 1897px; top: 953px; width: 54px; height: 54px; box-sizing: border-box; border-radius: 50%; border: 3px solid #e4f0e6; background: linear-gradient(#5ad87a, #2fb85c); color: #fff; font: 700 14px "Liberation Sans", sans-serif; display: flex; align-items: center; padding-left: 5px; }
</style>
